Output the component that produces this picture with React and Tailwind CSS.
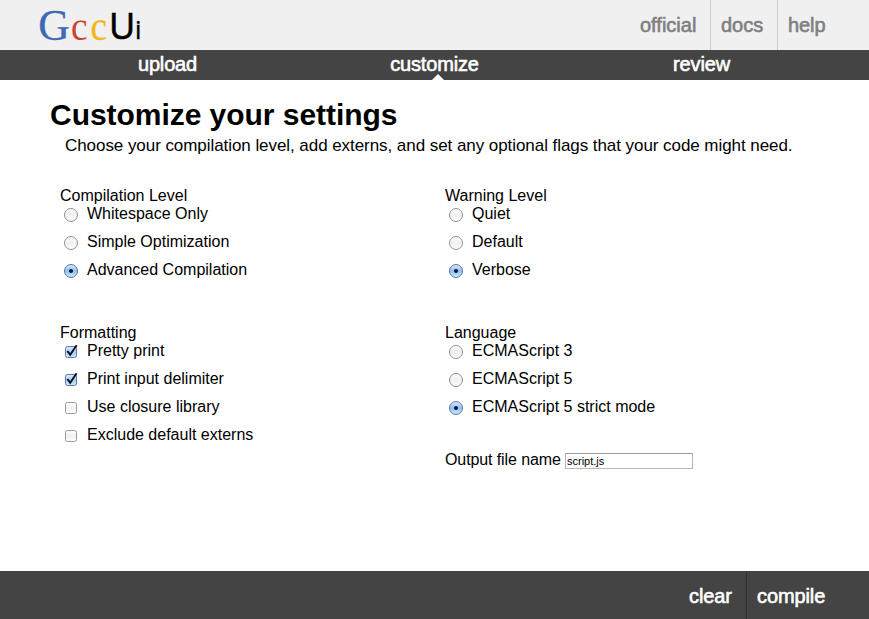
function Logo() {
  return (
    <svg className="block h-[50px] w-[160px]" viewBox="0 0 160 50" aria-label="GccUi">
      <g fontFamily="'Liberation Serif', serif">
        <text x="38.3" y="39.5" fontSize="43.5" fill="#4069b5" stroke="#4069b5" strokeWidth="0.3">G</text>
        <text x="71" y="39.5" fontSize="41" fill="#ca4330" textLength="16.5" lengthAdjust="spacingAndGlyphs">c</text>
        <text x="90.5" y="39.5" fontSize="41" fill="#f2b61b" stroke="#f2b61b" strokeWidth="0.3" textLength="16.5" lengthAdjust="spacingAndGlyphs">c</text>
      </g>
      <g fontFamily="'Open Sans', sans-serif" fill="#000" stroke="#000">
        <text x="109" y="38.5" fontSize="36" strokeWidth="0.7">U</text>
        <text x="134.9" y="39.2" fontSize="25.5" strokeWidth="0.4">i</text>
      </g>
    </svg>
  );
}

function Radio({ on }) {
  return (
    <svg className="block size-4 shrink-0" viewBox="0 0 16 16">
      <defs>
        <linearGradient id="radioOff" x1="0" y1="0" x2="0" y2="1">
          <stop offset="0" stopColor="#fff" />
          <stop offset=".5" stopColor="#f0f0f0" />
          <stop offset="1" stopColor="#fdfdfd" />
        </linearGradient>
        <linearGradient id="radioOn" x1="0" y1="0" x2="0" y2="1">
          <stop offset="0" stopColor="#dcecfb" />
          <stop offset=".5" stopColor="#8fc1f2" />
          <stop offset="1" stopColor="#c9efff" />
        </linearGradient>
      </defs>
      <circle cx="8" cy="8" r="6.5" fill={on ? "url(#radioOn)" : "url(#radioOff)"} stroke={on ? "#6272ad" : "#929292"} />
      {on && <circle cx="8" cy="8" r="2.1" fill="#0c1a38" />}
    </svg>
  );
}

function Check({ on }) {
  return (
    <svg className="block size-4 shrink-0 overflow-visible" viewBox="0 0 16 16">
      <defs>
        <linearGradient id="checkOff" x1="0" y1="0" x2="0" y2="1">
          <stop offset="0" stopColor="#fff" />
          <stop offset=".5" stopColor="#f1f1f1" />
          <stop offset="1" stopColor="#fff" />
        </linearGradient>
        <linearGradient id="checkOn" x1="0" y1="0" x2="0" y2="1">
          <stop offset="0" stopColor="#e0eefc" />
          <stop offset=".5" stopColor="#a4cdf4" />
          <stop offset="1" stopColor="#c4ecff" />
        </linearGradient>
      </defs>
      <rect x="2.5" y="2.5" width="11" height="11" rx="2" fill={on ? "url(#checkOn)" : "url(#checkOff)"} stroke={on ? "#6575b0" : "#9a9a9a"} />
      {on && <path d="M4.4 7 7.2 10.8 13.6 1.2" fill="none" stroke="#0b1020" strokeWidth="1.9" />}
    </svg>
  );
}

function Group({ title, type, options }) {
  return (
    <fieldset>
      <legend className="block h-[18px] leading-[18px]">{title}</legend>
      {options.map(([label, on]) => (
        <label key={label} className="flex h-7 items-start pl-[3px]">
          <span className="pt-[2px]">{type === "radio" ? <Radio on={on} /> : <Check on={on} />}</span>
          <span className="ml-2 leading-[18px] whitespace-nowrap">{label}</span>
        </label>
      ))}
    </fieldset>
  );
}

const stroke = "text-[20px] leading-[24px] [-webkit-text-stroke:0.6px_currentColor]";

export default function App() {
  return (
    <div className="flex h-[619px] w-[869px] flex-col overflow-hidden bg-white text-[16px] text-black [font-family:'Liberation_Sans',Arial,sans-serif]">
      <header className="flex h-[50px] shrink-0 justify-between bg-[#f0f0f0]">
        <Logo />
        <nav className={`flex pr-[34px] text-[#808080] ${stroke}`}>
          <a className="w-[80px] pt-[13px] pl-[10px]">official</a>
          <a className="w-[67px] border-l border-[#cccccc] pt-[13px] pl-[10px]">docs</a>
          <a className="w-[58px] border-l border-[#cccccc] pt-[13px] pl-[10px] tracking-[-0.1px]">help</a>
        </nav>
      </header>
      <nav className={`grid h-[30px] shrink-0 grid-cols-3 bg-[#444444] px-[34px] pt-[2px] text-center tracking-[-0.15px] text-white ${stroke}`}>
        <a>upload</a>
        <a className="relative">
          customize
          <svg className="absolute bottom-0 left-[131px] h-[6px] w-[12px]" viewBox="0 0 12 6">
            <path d="M0 6 6 0 12 6Z" fill="#fff" />
          </svg>
        </a>
        <a>review</a>
      </nav>
      <main className="flex-1 px-[50px] pt-[17px]">
        <h1 className="h-[39px] text-[30px] leading-[36px] font-bold tracking-[-0.04px]">Customize your settings</h1>
        <p className="pl-[15px] text-[17px] leading-[20px] tracking-[-0.06px] whitespace-nowrap">
          Choose your compilation level, add externs, and set any optional flags that your code might need.
        </p>
        <div className="mt-[31px] grid grid-cols-[385px_1fr] pl-[10px]">
          <div className="flex flex-col gap-[35px]">
            <Group title="Compilation Level" type="radio" options={[["Whitespace Only", false], ["Simple Optimization", false], ["Advanced Compilation", true]]} />
            <Group title="Formatting" type="check" options={[["Pretty print", true], ["Print input delimiter", true], ["Use closure library", false], ["Exclude default externs", false]]} />
          </div>
          <div className="flex flex-col gap-[35px]">
            <Group title="Warning Level" type="radio" options={[["Quiet", false], ["Default", false], ["Verbose", true]]} />
            <div>
              <Group title="Language" type="radio" options={[["ECMAScript 3", false], ["ECMAScript 5", false], ["ECMAScript 5 strict mode", true]]} />
              <label className="mt-[25px] flex items-start leading-[18px]">
                <span className="w-[120px] tracking-[-0.1px]">Output file name</span>
                <input className="mt-[2px] h-[16px] w-[128px] border border-[#b8b8b8] border-t-[#999999] px-px text-[11px] leading-[13px]" defaultValue="script.js" />
              </label>
            </div>
          </div>
        </div>
      </main>
      <footer className={`flex h-[48px] shrink-0 justify-end bg-[#444444] pr-[34px] tracking-[-0.1px] text-white ${stroke}`}>
        <a className="w-[67px] pt-[13px] pl-[10px]">clear</a>
        <a className="w-[89px] border-l border-[#303030] pt-[13px] pl-[10px]">compile</a>
      </footer>
    </div>
  );
}
